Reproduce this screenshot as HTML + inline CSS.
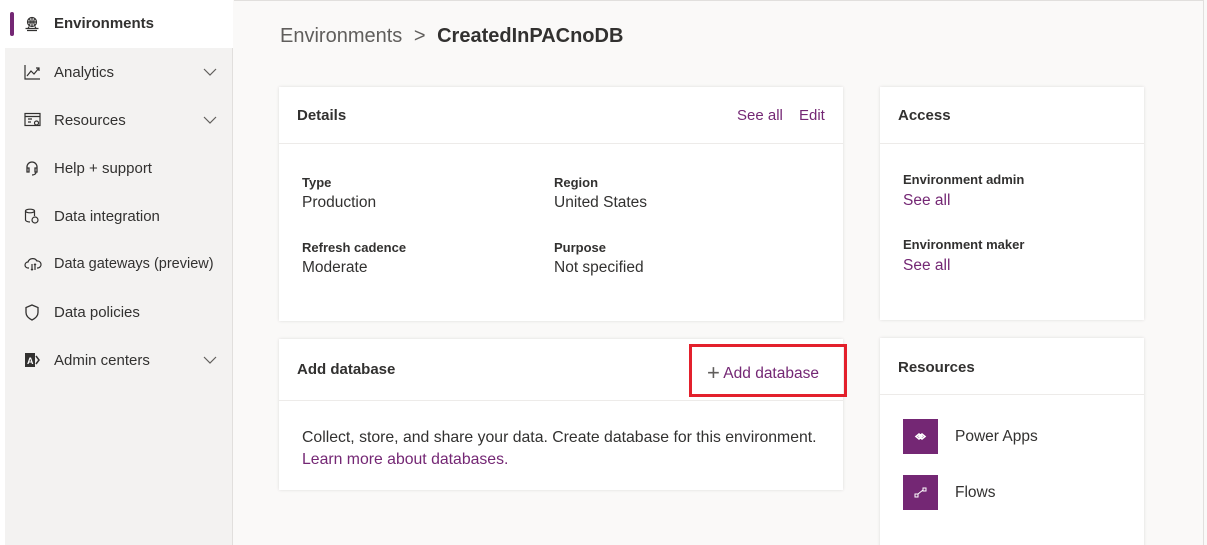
<!DOCTYPE html>
<html><head><style>
*{margin:0;padding:0;box-sizing:border-box}
html,body{width:1207px;height:545px;overflow:hidden}
body{background:#faf9f8;font-family:"Liberation Sans",sans-serif;color:#323130;position:relative}
.side{position:absolute;left:5px;top:0;width:228px;height:545px;background:#f3f2f1;border-right:1px solid #e1dfdd}
.leftw{position:absolute;left:0;top:0;width:5px;height:545px;background:#fff}
.item{position:absolute;left:0;width:228px;height:48px;font-size:15px}
.item svg.ic{position:absolute;left:19px;top:16px}
.item span{position:absolute;left:49px;top:16px}
.item svg.chev{position:absolute;left:198px;top:20px}
.card{position:absolute;background:#fff;box-shadow:0 0 3px rgba(0,0,0,.12)}
.hd{position:absolute;left:0;right:0;top:0;border-bottom:1px solid #edebe9}
.t{position:absolute;font-size:15px}
.lbl{position:absolute;font-size:13px;font-weight:bold;color:#323130}
.val{position:absolute;font-size:15.5px;color:#323130}
.lk{color:#742774}
</style></head><body>
<div class="leftw"></div>
<div class="side">
 <div class="item" style="top:0;background:#fff"><div style="position:absolute;left:5px;top:12px;width:4px;height:24px;background:#742774;border-radius:2px"></div>
  <svg class="ic" width="16" height="16" viewBox="0 0 16 16" fill="none" stroke="#323130" stroke-width="1.2"><circle cx="8" cy="6" r="4.5"/><path d="M3.5 6h9M8 1.5v9M5.5 3c1 2 1 4 0 6M10.5 3c-1 2-1 4 0 6M1.5 12.5h13M3 14.5h10M5 10.5l-1 2M11 10.5l1 2"/></svg>
  <span style="font-weight:bold;top:15px">Environments</span></div>
 <div class="item" style="top:48px"><svg class="ic" width="17" height="16" viewBox="0 0 17 16" fill="none" stroke="#323130" stroke-width="1.2"><path d="M1 1v14h15M3 12l4-5 3 3 5-6M12 4h3v3"/></svg><span>Analytics</span><svg class="chev" width="14" height="8"><path d="M1 1l6 6 6-6" fill="none" stroke="#605e5c" stroke-width="1.2"/></svg></div>
 <div class="item" style="top:96px"><svg class="ic" width="18" height="16" viewBox="0 0 18 16" fill="none" stroke="#323130" stroke-width="1.2"><rect x="1" y="1.5" width="15" height="12"/><path d="M1 4.5h15M4 7h4M4 10h3"/><circle cx="12.5" cy="11" r="2"/></svg><span>Resources</span><svg class="chev" width="14" height="8"><path d="M1 1l6 6 6-6" fill="none" stroke="#605e5c" stroke-width="1.2"/></svg></div>
 <div class="item" style="top:144px"><svg class="ic" width="16" height="16" viewBox="0 0 16 16" fill="none" stroke="#323130" stroke-width="1.3"><path d="M3 9V7a5 5 0 0110 0v2M3 8h2v4H3zM11 8h2v4h-2zM12 12c0 2-2 3-4 3"/></svg><span>Help + support</span></div>
 <div class="item" style="top:192px"><svg class="ic" width="17" height="16" viewBox="0 0 17 16" fill="none" stroke="#323130" stroke-width="1.2"><ellipse cx="6" cy="3" rx="4.5" ry="1.8"/><path d="M1.5 3v9c0 1 2 2 4.5 2M10.5 3v5"/><circle cx="11" cy="12" r="3"/></svg><span>Data integration</span></div>
 <div class="item" style="top:240px"><svg class="ic" width="18" height="16" viewBox="0 0 18 16" fill="none" stroke="#323130" stroke-width="1.2"><path d="M5 12H4a3 3 0 010-6 5 5 0 019-1 3.5 3.5 0 011 7h-1M8 8v6M11 8v6M7 13l1 1 1-1M10 9l1-1 1 1"/></svg><span style="font-size:14.5px">Data gateways (preview)</span></div>
 <div class="item" style="top:288px"><svg class="ic" width="16" height="17" viewBox="0 0 16 17" fill="none" stroke="#323130" stroke-width="1.3"><path d="M8 1l6 2.5v5c0 4-3 6-6 7.5-3-1.5-6-3.5-6-7.5v-5z"/></svg><span>Data policies</span></div>
 <div class="item" style="top:336px"><svg class="ic" width="17" height="16" viewBox="0 0 17 16"><rect x="1" y="1" width="10" height="14" fill="#323130"/><text x="3" y="12" font-size="9" fill="#fff" font-family="Liberation Sans" font-weight="bold">A</text><path d="M12 4l3 4-3 4" fill="none" stroke="#323130" stroke-width="1.5"/></svg><span>Admin centers</span><svg class="chev" width="14" height="8"><path d="M1 1l6 6 6-6" fill="none" stroke="#605e5c" stroke-width="1.2"/></svg></div>
</div>
<div style="position:absolute;left:1203px;top:0;width:1px;height:545px;background:#e1dfdd"></div>
<div style="position:absolute;left:234px;top:0;width:969px;height:1px;background:#e1dfdd"></div>
<div style="position:absolute;left:280px;top:25px;font-size:20px;color:#605e5c">Environments <span style="margin:0 6px">&gt;</span> <span style="color:#323130;font-weight:bold">CreatedInPACnoDB</span></div>

<div class="card" style="left:279px;top:87px;width:564px;height:234px">
 <div class="hd" style="height:57px"></div>
 <div class="t" style="left:18px;top:20px;font-weight:bold">Details</div>
 <div class="t lk" style="left:458px;top:20px">See all</div>
 <div class="t lk" style="left:520px;top:20px">Edit</div>
 <div class="lbl" style="left:23px;top:88px">Type</div><div class="val" style="left:23px;top:107px">Production</div>
 <div class="lbl" style="left:275px;top:88px">Region</div><div class="val" style="left:275px;top:107px">United States</div>
 <div class="lbl" style="left:23px;top:153px">Refresh cadence</div><div class="val" style="left:23px;top:172px">Moderate</div>
 <div class="lbl" style="left:275px;top:153px">Purpose</div><div class="val" style="left:275px;top:172px">Not specified</div>
</div>

<div class="card" style="left:880px;top:87px;width:264px;height:233px">
 <div class="hd" style="height:57px"></div>
 <div class="t" style="left:18px;top:20px;font-weight:bold">Access</div>
 <div class="lbl" style="left:23px;top:85px">Environment admin</div><div class="val lk" style="left:23px;top:105px">See all</div>
 <div class="lbl" style="left:23px;top:150px">Environment maker</div><div class="val lk" style="left:23px;top:170px">See all</div>
</div>

<div class="card" style="left:279px;top:339px;width:564px;height:151px">
 <div class="hd" style="height:62px"></div>
 <div class="t" style="left:18px;top:22px;font-weight:bold">Add database</div>
 <div class="t lk" style="left:428px;top:21px;font-size:15.5px"><span style="font-size:22px;font-weight:300;color:#605e5c;vertical-align:-2px">+</span> Add database</div>
 <div class="val" style="left:23px;top:88px;line-height:22px;font-size:15.8px">Collect, store, and share your data. Create database for this environment.<br><span class="lk">Learn more about databases.</span></div>
</div>
<div style="position:absolute;left:689px;top:344px;width:158px;height:53px;border:3px solid #e3202c"></div>

<div class="card" style="left:880px;top:338px;width:264px;height:220px">
 <div class="hd" style="height:57px"></div>
 <div class="t" style="left:18px;top:21px;font-weight:bold">Resources</div>
 <div style="position:absolute;left:23px;top:81px;width:35px;height:35px;background:#742774"><svg width="35" height="35"><path d="M13 17.5l3-2.5 3 2.5-3 2.5zM16 17.5l3-2.5 3 2.5-3 2.5z" fill="none" stroke="#fff" stroke-width="1.6"/></svg></div>
 <div class="val" style="left:75px;top:90px">Power Apps</div>
 <div style="position:absolute;left:23px;top:137px;width:35px;height:35px;background:#742774"><svg width="35" height="35"><rect x="12" y="19" width="3" height="3" fill="none" stroke="#fff"/><rect x="20" y="13" width="3" height="3" fill="none" stroke="#fff"/><path d="M15 19l5-4" stroke="#fff"/></svg></div>
 <div class="val" style="left:75px;top:146px">Flows</div>
</div>
</body></html>
